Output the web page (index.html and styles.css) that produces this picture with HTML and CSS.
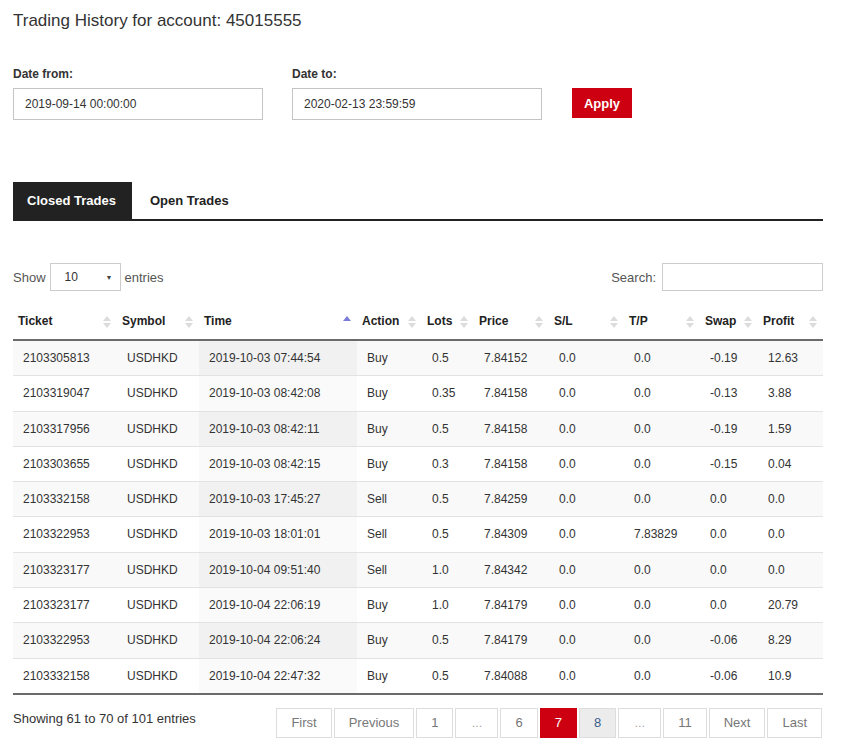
FILE: index.html
```html
<!DOCTYPE html>
<html>
<head>
<meta charset="utf-8">
<link rel="stylesheet" href="styles.css">
</head>
<body>
<div class="page">
  <h1 class="title">Trading History for account: 45015555</h1>
  <div class="filters">
    <div class="field">
      <label class="label">Date from:</label>
      <div class="text-input">2019-09-14 00:00:00</div>
    </div>
    <div class="field">
      <label class="label">Date to:</label>
      <div class="text-input">2020-02-13 23:59:59</div>
    </div>
    <button class="apply">Apply</button>
  </div>

  <div class="tabs">
    <div class="tab active">Closed Trades</div>
    <div class="tab">Open Trades</div>
  </div>

  <div class="controls">
    <div class="length">Show <span class="select"><span>10</span><span class="caret">▼</span></span> entries</div>
    <div class="search">Search: <span class="search-box"></span></div>
  </div>

  <table class="trades">
    <colgroup>
      <col style="width:104px"><col style="width:82px"><col style="width:158px"><col style="width:65px"><col style="width:52px"><col style="width:75px"><col style="width:75px"><col style="width:76px"><col style="width:58px"><col style="width:65px">
    </colgroup>
    <thead>
      <tr>
        <th class="sort">Ticket</th>
        <th class="sort">Symbol</th>
        <th class="sort asc">Time</th>
        <th class="sort">Action</th>
        <th class="sort">Lots</th>
        <th class="sort">Price</th>
        <th class="sort">S/L</th>
        <th class="sort">T/P</th>
        <th class="sort">Swap</th>
        <th class="sort">Profit</th>
      </tr>
    </thead>
    <tbody>
      <tr><td>2103305813</td><td>USDHKD</td><td class="sorted">2019-10-03 07:44:54</td><td>Buy</td><td>0.5</td><td>7.84152</td><td>0.0</td><td>0.0</td><td>-0.19</td><td>12.63</td></tr>
      <tr><td>2103319047</td><td>USDHKD</td><td class="sorted">2019-10-03 08:42:08</td><td>Buy</td><td>0.35</td><td>7.84158</td><td>0.0</td><td>0.0</td><td>-0.13</td><td>3.88</td></tr>
      <tr><td>2103317956</td><td>USDHKD</td><td class="sorted">2019-10-03 08:42:11</td><td>Buy</td><td>0.5</td><td>7.84158</td><td>0.0</td><td>0.0</td><td>-0.19</td><td>1.59</td></tr>
      <tr><td>2103303655</td><td>USDHKD</td><td class="sorted">2019-10-03 08:42:15</td><td>Buy</td><td>0.3</td><td>7.84158</td><td>0.0</td><td>0.0</td><td>-0.15</td><td>0.04</td></tr>
      <tr><td>2103332158</td><td>USDHKD</td><td class="sorted">2019-10-03 17:45:27</td><td>Sell</td><td>0.5</td><td>7.84259</td><td>0.0</td><td>0.0</td><td>0.0</td><td>0.0</td></tr>
      <tr><td>2103322953</td><td>USDHKD</td><td class="sorted">2019-10-03 18:01:01</td><td>Sell</td><td>0.5</td><td>7.84309</td><td>0.0</td><td>7.83829</td><td>0.0</td><td>0.0</td></tr>
      <tr><td>2103323177</td><td>USDHKD</td><td class="sorted">2019-10-04 09:51:40</td><td>Sell</td><td>1.0</td><td>7.84342</td><td>0.0</td><td>0.0</td><td>0.0</td><td>0.0</td></tr>
      <tr><td>2103323177</td><td>USDHKD</td><td class="sorted">2019-10-04 22:06:19</td><td>Buy</td><td>1.0</td><td>7.84179</td><td>0.0</td><td>0.0</td><td>0.0</td><td>20.79</td></tr>
      <tr><td>2103322953</td><td>USDHKD</td><td class="sorted">2019-10-04 22:06:24</td><td>Buy</td><td>0.5</td><td>7.84179</td><td>0.0</td><td>0.0</td><td>-0.06</td><td>8.29</td></tr>
      <tr><td>2103332158</td><td>USDHKD</td><td class="sorted">2019-10-04 22:47:32</td><td>Buy</td><td>0.5</td><td>7.84088</td><td>0.0</td><td>0.0</td><td>-0.06</td><td>10.9</td></tr>
    </tbody>
  </table>

  <div class="footer">
    <div class="info">Showing 61 to 70 of 101 entries</div>
    <div class="pager">
      <span class="pg">First</span>
      <span class="pg">Previous</span>
      <span class="pg">1</span>
      <span class="pg ell">…</span>
      <span class="pg">6</span>
      <span class="pg current">7</span>
      <span class="pg hover">8</span>
      <span class="pg ell">…</span>
      <span class="pg">11</span>
      <span class="pg">Next</span>
      <span class="pg">Last</span>
    </div>
  </div>
</div>
</body>
</html>
```

FILE: styles.css
```css
* { box-sizing: border-box; }
html, body { margin: 0; padding: 0; background: #fff; }
body {
  font-family: "Liberation Sans", Arial, sans-serif;
  color: #333;
  font-size: 13px;
}
.page {
  width: 810px;
  margin-left: 13px;
  padding-top: 10px;
}
.title {
  margin: 0;
  font-size: 17px;
  font-weight: normal;
  line-height: 22px;
  color: #333;
}
.filters {
  display: flex;
  align-items: flex-end;
  margin-top: 35px;
}
.field {
  display: flex;
  flex-direction: column;
  width: 250px;
  margin-right: 29px;
}
.field + .field { margin-right: 30px; }
.label {
  font-size: 12px;
  font-weight: bold;
  line-height: 14px;
  margin-bottom: 7px;
  color: #333;
}
.text-input {
  height: 32px;
  border: 1px solid #c4c4c4;
  padding: 0 11px;
  font-size: 12px;
  line-height: 30px;
  color: #333;
}
.apply {
  align-self: flex-end;
  margin-bottom: 2px;
  width: 60px;
  height: 30px;
  border: 0;
  background: #cc0010;
  color: #fff;
  font-family: "Liberation Sans", Arial, sans-serif;
  font-weight: bold;
  font-size: 13px;
  padding: 0;
}
.tabs {
  display: flex;
  margin-top: 62px;
  border-bottom: 2px solid #222;
}
.tab {
  height: 37px;
  line-height: 37px;
  padding: 0 14px;
  font-weight: bold;
  font-size: 13px;
  color: #222;
}
.tab.active {
  background: #222;
  color: #fff;
  width: 119px;
  margin-right: 4px;
}
.controls {
  display: flex;
  justify-content: space-between;
  align-items: center;
  margin-top: 42px;
  height: 28px;
  color: #555;
}
.length, .search { display: flex; align-items: center; }
.select {
  display: inline-flex;
  align-items: center;
  justify-content: space-between;
  width: 71px;
  height: 28px;
  border: 1px solid #ccc;
  margin: 0 4px 0 4px;
  padding: 0 7px 0 14px;
  font-size: 12px;
  color: #333;
}
.caret { font-size: 7px; color: #444; }
.search-box {
  display: inline-block;
  width: 161px;
  height: 28px;
  border: 1px solid #ccc;
  margin-left: 6px;
}
.trades {
  width: 810px;
  margin-top: 14px;
  border-collapse: collapse;
  table-layout: fixed;
  font-size: 12px;
  color: #333;
}
.trades th {
  text-align: left;
  font-weight: bold;
  font-size: 12px;
  padding: 9px 5px 10px 5px;
  line-height: 15px;
  border-bottom: 2px solid #6b6b6b;
  position: relative;
  color: #222;
}
.trades th.sort::before,
.trades th.sort::after {
  content: "";
  position: absolute;
  right: 6px;
  width: 0;
  height: 0;
  border-left: 4px solid transparent;
  border-right: 4px solid transparent;
}
.trades th.sort::before {
  top: 11px;
  border-bottom: 5px solid #dcdcdc;
}
.trades th.sort::after {
  top: 18px;
  border-top: 5px solid #dcdcdc;
}
.trades th.asc::before { border-bottom-color: #7b7bd8; }
.trades th.asc::after { display: none; }
.trades td {
  padding: 8px 9px 8px 10px;
  line-height: 18.3px;
  border-top: 1px solid #e2e2e2;
  white-space: nowrap;
}
.trades tbody tr:first-child td { border-top: 0; }
.trades tbody tr:nth-child(odd) td { background: #f9f9f9; }
.trades tbody tr:nth-child(odd) td.sorted { background: #f1f1f1; }
.trades tbody tr:nth-child(even) td.sorted { background: #fafafa; }
.trades tbody tr:last-child td { border-bottom: 2px solid #6b6b6b; }
.footer {
  display: flex;
  justify-content: space-between;
  align-items: flex-start;
  margin-top: 13px;
}
.info {
  font-size: 13px;
  line-height: 16px;
  margin-top: 3px;
  color: #333;
}
.pager { display: flex; margin-right: 1px; }
.pg {
  display: inline-block;
  height: 30px;
  line-height: 28px;
  padding: 0 14px;
  border: 1px solid #ddd;
  margin-left: 2px;
  font-size: 13px;
  color: #777;
}
.pg.ell { font-size: 11px; color: #999; padding: 0 14px; width: 43px; text-align: center; }
.pg.current { background: #cc0010; border-color: #cc0010; color: #fff; }
.pg.hover { background: #ececec; color: #3c5e8c; }
```
